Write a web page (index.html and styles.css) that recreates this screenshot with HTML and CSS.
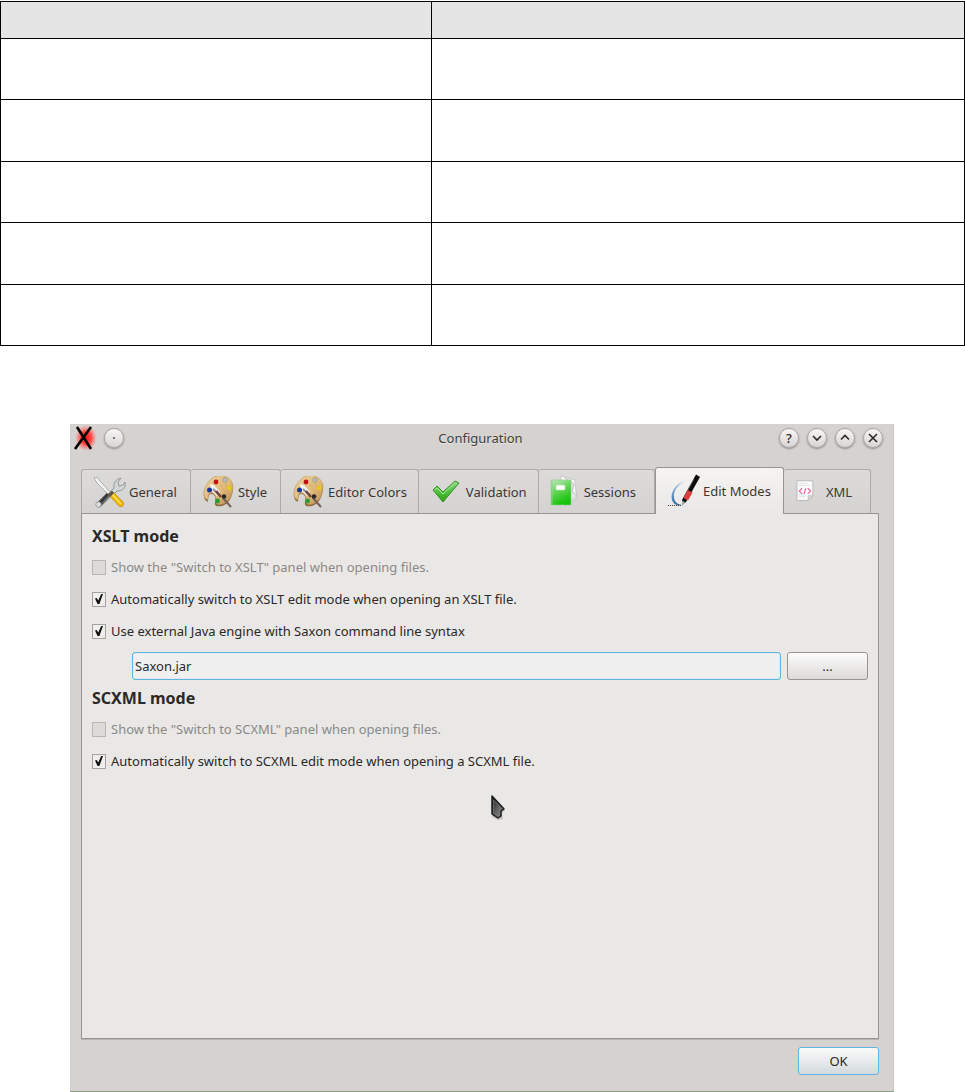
FILE: index.html
```html
<!DOCTYPE html>
<html lang="en">
<head>
<meta charset="utf-8">
<title>Configuration</title>
<link rel="stylesheet" href="styles.css">
</head>
<body>
<svg class="defs" width="0" height="0" aria-hidden="true">
  <defs>
    <linearGradient id="wood" x1="0" y1="0" x2="1" y2="1"><stop offset="0" stop-color="#ecd29c"/><stop offset=".6" stop-color="#dfb878"/><stop offset="1" stop-color="#b98a4e"/></linearGradient>
    <linearGradient id="leaf" x1="0" y1="0" x2="0" y2="1"><stop offset="0" stop-color="#8fdc8a"/><stop offset=".5" stop-color="#4fc23c"/><stop offset="1" stop-color="#2f9e10"/></linearGradient>
    <linearGradient id="book" x1="0" y1="0" x2=".4" y2="1"><stop offset="0" stop-color="#c9e8c6"/><stop offset=".5" stop-color="#5fd552"/><stop offset="1" stop-color="#18c40c"/></linearGradient>
    <radialGradient id="glow"><stop offset="0" stop-color="#ff1010"/><stop offset=".5" stop-color="#ff4a48"/><stop offset="1" stop-color="#ff8080" stop-opacity="0"/></radialGradient>
    <linearGradient id="arc" x1="0" y1="0" x2="0" y2="1"><stop offset="0" stop-color="#b9d6ee"/><stop offset="1" stop-color="#2c639c"/></linearGradient>
    <linearGradient id="arrow" x1="0" y1="0" x2="1" y2="1"><stop offset="0" stop-color="#222"/><stop offset="1" stop-color="#999"/></linearGradient>
    <symbol id="palette" viewBox="0 0 32 32">
      <path d="M2 24C-1 18 2 7 11 2c8-4 18 0 19 9 0 9-4 17-11 19-5 1-8 0-7-4 1-5 0-8-4-8-3 0-3 5-3 8z" fill="#8f6a3c"/>
      <path d="M2 22C-1 17 2 7 11 1c8-4 18 0 19 9 0 9-4 16-11 18-5 1-7-1-6-4 0-4-1-7-5-7-3 0-3 4-3 7z" fill="url(#wood)" stroke="#c59b5d" stroke-width=".7"/>
      <path d="M13 4l-4 8M21 3l5 15M17 8l8 12" stroke="#cda366" stroke-width=".6"/>
      <path d="M20 22l8 9" stroke="#75605a" stroke-width="2"/>
      <path d="M7 8l4 1 6 7-3 4-6-6z" fill="#f4f4f6"/><path d="M10 13l5 5" stroke="#8a8f98" stroke-width="2"/>
      <path d="M13 15l5 6" stroke="#72483c" stroke-width="2.600"/>
      <circle cx="13" cy="6" r="2.400" fill="#c70f15"/><circle cx="22" cy="4" r="2.300" fill="#b8bcb5" stroke="#858a87" stroke-width=".5"/>
      <circle cx="26" cy="12" r="2.300" fill="#e5cb13"/><circle cx="6.500" cy="14" r="2.500" fill="#16369b"/>
      <circle cx="21" cy="20.500" r="2.300" fill="#292929"/><circle cx="14.500" cy="25" r="2.400" fill="#2b9a35"/>
    </symbol>
  </defs>
</svg>

<table class="grid">
  <colgroup><col class="grid-first"><col></colgroup>
  <thead><tr><th></th><th></th></tr></thead>
  <tbody>
    <tr><td></td><td></td></tr>
    <tr class="tall"><td></td><td></td></tr>
    <tr><td></td><td></td></tr>
    <tr class="tall"><td></td><td></td></tr>
    <tr><td></td><td></td></tr>
  </tbody>
</table>

<main class="dialog">
  <header class="titlebar">
    <div class="controls">
      <svg class="logo" viewBox="0 0 24 26" aria-hidden="true"><ellipse cx="13" cy="13" rx="11" ry="13" fill="url(#glow)"/><path d="M4 2l14 22M18 2L2 24" stroke="#000" stroke-width="2.600" fill="none"/></svg>
      <button class="round" aria-label="Menu"><svg viewBox="0 0 20 20"><circle cx="10" cy="10" r="1" fill="#555"/></svg></button>
    </div>
    <h1 class="title">Configuration</h1>
    <div class="controls controls-end">
      <button class="round" aria-label="Help">?</button>
      <button class="round" aria-label="Minimize"><svg viewBox="0 0 20 20"><path d="M6 8l4 4 4-4"/></svg></button>
      <button class="round" aria-label="Maximize"><svg viewBox="0 0 20 20"><path d="M6 11.500l4-4 4 4"/></svg></button>
      <button class="round" aria-label="Close"><svg viewBox="0 0 20 20"><path d="M6 6l8 8M14 6l-8 8"/></svg></button>
    </div>
  </header>

  <div class="tabs" role="tablist">
    <button class="tab tab-general" role="tab"><svg class="icon" viewBox="0 0 32 32">
      <path d="M3 27L17 15 20 12c-1-5 2-9 7-10l-3 4 1 4 4-1 2-3c1 6-2 9-8 9L6 31z" fill="#d3d6d6" stroke="#858989" stroke-width=".8"/>
      <path d="M14 16l3 3L7 30c-2 2-6 0-4-3z" fill="#666" stroke="#555" stroke-width=".6"/><path d="M14 18l-8 9" stroke="#333" stroke-width="2"/><circle cx="4.500" cy="28.500" r="2.700" fill="#ddd" stroke="#777" stroke-width=".6"/>
      <path d="M0 2l3-1 3 4 12 13-2 2L3 7z" fill="#f0f1f1" stroke="#929696" stroke-width=".7"/>
      <path d="M14 18l4-3 11 11c2 3-1 6-4 4z" fill="#efb70a" stroke="#b98509" stroke-width=".7"/><path d="M18 18l9 10" stroke="#ffe052" stroke-width="1.700"/><path d="M14 18l4-3 2 2-4 4z" fill="#555"/></svg>General</button>
    <button class="tab tab-style" role="tab"><svg class="icon"><use href="#palette"/></svg>Style</button>
    <button class="tab tab-close" role="tab"><svg class="icon"><use href="#palette"/></svg>Editor Colors</button>
    <button class="tab tab-close" role="tab"><svg class="icon" viewBox="0 0 32 32"><path d="M2 14l4-4 6 6L24 5l4 2-16 19z" fill="url(#leaf)" stroke="#3c8f2c" stroke-width="1" stroke-linejoin="round"/><path d="M4 14l2-2 6 6L24 7" fill="none" stroke="#a8e69c" stroke-width="1"/></svg>Validation</button>
    <button class="tab tab-sessions" role="tab"><svg class="icon" viewBox="0 0 32 32"><path d="M10 0l14 4 1 11 1 7-8 6-8 3-3-6z" fill="#f4f4f4" stroke="#c9c9c9"/><path d="M14 2l9 6-2 7 5 5-7 6" fill="#e5e5e5" stroke="#c3c3c3"/><path d="M0 4h20v25H0z" fill="url(#book)" stroke="#8ccd88" stroke-width=".6"/><path d="M1 4v25" stroke="#90cf8d" stroke-width="1"/><rect x="5" y="9" width="9" height="5" rx="1" fill="#fff" stroke="#b8dfb5" stroke-width=".7"/></svg>Sessions</button>
    <button class="tab tab-active" role="tab" aria-selected="true"><svg class="icon" viewBox="0 0 32 32"><path d="M17 6C6 9 1 20 5 27c2 3 5 4 9 3-6-1-8-4-8-9 0-6 4-11 11-15z" fill="url(#arc)"/><path d="M0 30.500h14" stroke="#444" stroke-width="1.200" stroke-dasharray="1 1"/><path d="M28-.5l4 2.500-14 25-4 3 0-5z" fill="#0c0c0c"/><path d="M19.500 15l5 2.500-4.500 8-4.500-2.500z" fill="#dc3e3e"/><path d="M14 25.500l3 1.800-3 4z" fill="#aaa"/><path d="M26 4l-6 11" stroke="#777" stroke-width=".7"/></svg>Edit Modes</button>
    <button class="tab tab-xml" role="tab"><svg class="icon" viewBox="0 0 32 32"><path d="M1 4h17v16l-5 5H1z" fill="#fafafa" stroke="#b8b8b8"/><path d="M3 7h9M3 9h12M3 19h6M3 21h7" stroke="#e0e0e0"/><path d="M18 20h-5v5z" fill="#ddd" stroke="#b5b5b5" stroke-width=".8"/><path d="M6.500 12l-3 3 3 3M12.500 12l3 3-3 3M10.500 12l-2 6" fill="none" stroke="#e86a9d" stroke-width="1.300"/></svg>XML</button>
  </div>

  <div class="pane" role="tabpanel">
    <section class="group">
      <h2 class="heading">XSLT mode</h2>
      <label class="option option-off"><input class="tick" type="checkbox" disabled>Show the "Switch to XSLT" panel when opening files.</label>
      <label class="option"><input class="tick" type="checkbox" checked>Automatically switch to XSLT edit mode when opening an XSLT file.</label>
      <label class="option"><input class="tick" type="checkbox" checked>Use external Java engine with Saxon command line syntax</label>
      <div class="path">
        <input class="field" type="text" value="Saxon.jar" aria-label="Saxon engine path">
        <button class="push">...</button>
      </div>
    </section>
    <section class="group">
      <h2 class="heading">SCXML mode</h2>
      <label class="option option-off"><input class="tick" type="checkbox" disabled>Show the "Switch to SCXML" panel when opening files.</label>
      <label class="option"><input class="tick" type="checkbox" checked>Automatically switch to SCXML edit mode when opening a SCXML file.</label>
    </section>
    <svg class="pointer" viewBox="0 0 16 26" aria-hidden="true"><path d="M3 3l12 13-3 2 1 6-5 1-6-3z" fill="#888" opacity=".4"/><path d="M2 1l12 13-3 2 0 5-3 2-6-4z" fill="url(#arrow)" stroke="#1b1b1b" stroke-width="1.500" stroke-linejoin="round"/><path d="M3.500 5v13l4 2.500 2-1 0-5 2-1z" fill="none" stroke="#777" stroke-width=".6"/></svg>
  </div>

  <footer class="actions"><button class="push push-default">OK</button></footer>
</main>
</body>
</html>
```
FILE: styles.css
```css
* { box-sizing: border-box; }

body {
  margin: 0;
  padding-top: 1px;
  min-height: 100vh;
  display: flex;
  flex-direction: column;
  background: #fff;
  color: #2b2927;
  font: 13px/20px "Noto Sans", sans-serif;
}

button, input { font: inherit; color: inherit; margin: 0; }

.defs { position: absolute; }

.grid {
  width: 100%;
  border-collapse: collapse;
  table-layout: fixed;
}
.grid-first { width: 44.7%; }
.grid th, .grid td { border: 1px solid #000; padding: 0; }
.grid th { height: 37px; background: #e5e5e5; }
.grid td { height: 61px; }
.grid .tall td { height: 62px; }

.dialog {
  flex: 1;
  display: flex;
  flex-direction: column;
  margin: 78px 71px 0 70px;
  padding: 0 14px 0 11px;
  background: #d6d2cf;
  border-right: 1px solid #c9c5c2;
  border-bottom: 1px solid #8b9d84;
}

.titlebar {
  display: grid;
  grid-template-columns: 1fr auto 1fr;
  align-items: center;
  height: 28px;
  margin: 0 -9px 15px -8px;
}
.title { margin: 0; font-size: 13px; line-height: 20px; font-weight: 400; color: #403d3b; text-shadow: 0 1px #e9e6e4; }
.controls { display: flex; align-items: center; gap: 7px; }
.controls-end { justify-content: flex-end; gap: 8px; padding-right: 5px; }
.logo { width: 24px; height: 26px; }
.round {
  display: grid;
  place-items: center;
  width: 20px;
  height: 20px;
  padding: 0;
  border: 1px solid #a9a6a3;
  border-radius: 50%;
  background: linear-gradient(#f7f6f6, #d8d5d3);
  box-shadow: 0 1px 2px #8b8785;
  font-weight: 500;
  line-height: 18px;
}
.round svg { width: 20px; height: 20px; margin: -1px; fill: none; stroke: #2b2927; stroke-width: 1.6; }
.round circle { stroke: none; }

.tabs { display: flex; align-items: flex-end; height: 46px; }
.tab {
  display: flex;
  align-items: center;
  gap: 3px;
  height: 44px;
  padding: 0 12px;
  border: 1px solid #adaaa8;
  border-left-width: 0;
  border-bottom: 0;
  border-radius: 3px 3px 0 0;
  background: linear-gradient(#dcdbd9, #d5d3d1);
  color: #3a3836;
  white-space: nowrap;
}
.tab-general { padding-right: 13px; border-left-width: 1px; }
.tab-style { padding-right: 13px; }
.tab-close { padding-right: 11px; }
.tab-sessions { gap: 1px; padding-right: 18px; }
.tab-active {
  position: relative;
  z-index: 1;
  height: 47px;
  margin-bottom: -1px;
  padding-bottom: 1px;
  border-left-width: 1px;
  border-color: #979492;
  background: linear-gradient(#f5f4f3, #e9e8e6);
}
.tab-xml { gap: 0; padding-right: 18px; }
.icon { width: 32px; height: 32px; flex: none; overflow: visible; }
.tab-xml .icon { width: 30px; }

.pane {
  position: relative;
  flex: 1;
  display: flex;
  flex-direction: column;
  gap: 8px;
  padding: 12px 10px;
  background: #e9e8e6;
  border: 1px solid #979492;
  box-shadow: 0 1px #b8b5b3;
}
.group { display: grid; gap: 10px; }
.heading { margin: 0; font-size: 16px; line-height: 20px; font-weight: 700; }
.option { display: flex; align-items: center; gap: 5px; height: 22px; }
.option-off { color: #8b8987; }

.tick {
  appearance: none;
  display: grid;
  place-items: center;
  width: 14px;
  height: 15px;
  border: 1px solid #a5a3a1;
  background: #f0efee;
}
.tick:disabled { background: #dddad7; border-color: #b8b6b3; }
.tick:checked::after {
  content: "";
  width: 8px;
  height: 10px;
  background: #111;
  clip-path: polygon(0 45%, 22% 40%, 40% 65%, 78% 0, 100% 0, 55% 100%, 32% 100%);
}

.path { display: flex; gap: 6px; padding-left: 40px; }
.field {
  flex: 1;
  min-width: 0;
  height: 28px;
  padding: 0 2px;
  border: 1px solid #62b5e3;
  border-radius: 3px;
  background: #f0f0f0;
  box-shadow: inset 0 0 1px #62b5e3;
  outline: 0;
}
.push {
  width: 81px;
  height: 28px;
  padding: 0;
  border: 1px solid #979492;
  border-radius: 3px;
  background: linear-gradient(#fcfcfc, #dcdad8);
}
.push-default { border-color: #62b5e3; background: linear-gradient(#fafbfb, #d3dadd); }

.pointer { position: absolute; left: 408px; top: 281px; width: 16px; height: 26px; }

.actions { display: flex; justify-content: flex-end; padding: 8px 0 16px; }
```
